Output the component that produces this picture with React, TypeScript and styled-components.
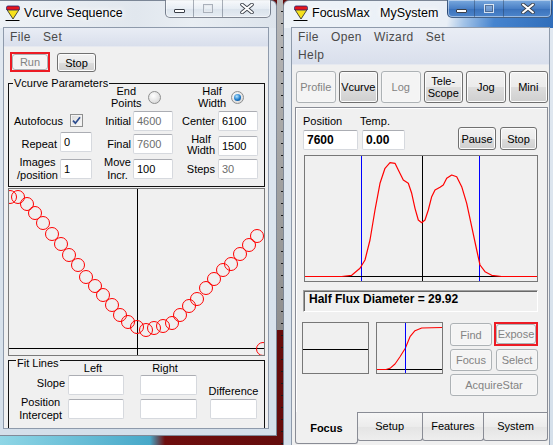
import React from "react"
import styled, { createGlobalStyle } from "styled-components"

const GlobalStyle = createGlobalStyle`
  html, body { margin: 0; padding: 0; }
  body {
    width: 553px;
    height: 445px;
    overflow: hidden;
    font-family: "Liberation Sans", Arial, sans-serif;
    font-size: 11px;
    color: #000;
  }
`

const Desktop = styled.div`
    position: relative;
    width: 553px;
    height: 445px;
    overflow: hidden;
    background:
        repeating-linear-gradient(to bottom, transparent 0 11px, #1a1a1a 11px 12px) 281px 0 / 2px 445px no-repeat,
        linear-gradient(to bottom, #b8b8b8, #8e8e8e) 277px 0 / 6px 330px no-repeat,
        linear-gradient(to right, #8fd6e6 0px, #47a8c9 150px, #6e0e0e 165px, #4f0707 100%);
`

// windows sit on a free desktop canvas
const Frame = styled.div<{ $x: number; $w: number; $h: number; $active?: boolean }>`
    position: absolute;
    left: ${p => p.$x}px;
    top: 0;
    width: ${p => p.$w}px;
    height: ${p => p.$h}px;
    box-sizing: border-box;
    padding: 0 7px 6px;
    display: flex;
    flex-direction: column;
    border: 1px solid rgba(50, 60, 80, 0.55);
    border-radius: 6px 6px 0 0;
    background:
        ${p => p.$active
            ? "linear-gradient(100deg, #eef3f8 0%, #e9eff6 60%, #a4c4e8 66%, #4684cf 77%, #2e6cb9 100%) top / 100% 27px no-repeat"
            : "linear-gradient(90deg, #eef2f6, #e1e7ee 50%, #e9eef3 70%, #dde4ec) top / 100% 27px no-repeat"},
        linear-gradient(#e2e9f1, #d4dfea);
`

const TitleBar = styled.div`
    height: 26px;
    display: flex;
    align-items: flex-start;
    flex-shrink: 0;
`

const IconBox = styled.svg`
    width: 16px;
    height: 16px;
    margin: 4px 0 0 2px;
    flex-shrink: 0;
`

const Title = styled.div`
    margin: 4px 0 0 3px;
    font-size: 12.5px;
    line-height: 16px;
    white-space: pre;
    text-shadow: 0 0 6px #fff, 0 0 10px #fff, 0 0 3px #fff;
`

const CaptionGroup = styled.div<{ $active?: boolean }>`
    display: flex;
    margin: -1px -2px 0 auto;
    height: 18px;
    box-sizing: border-box;
    border: 1px solid rgba(30, 40, 60, 0.55);
    border-top: none;
    border-radius: 0 0 5px 5px;
    overflow: hidden;
    background: ${p => p.$active
        ? "linear-gradient(#7aa9de, #4a80c6 50%, #3a71ba 51%, #4d86cc)"
        : "linear-gradient(rgba(255,255,255,.75), rgba(232,238,245,.7) 50%, rgba(215,224,234,.7) 51%, rgba(230,236,243,.75))"};
    box-shadow: inset 0 0 0 1px rgba(255, 255, 255, 0.45);
`

const CapButton = styled.div<{ $w: number }>`
    width: ${p => p.$w}px;
    display: flex;
    align-items: center;
    justify-content: center;
    & + & { border-left: 1px solid rgba(30, 40, 60, 0.35); }
`

const MinGlyph = styled.div`
    width: 11px;
    height: 4px;
    margin-top: 4px;
    box-sizing: border-box;
    background: #fff;
    border: 1px solid #3a3f48;
    border-radius: 1px;
`

const MaxGlyph = styled.div<{ $active?: boolean }>`
    width: 10px;
    height: 9px;
    box-sizing: border-box;
    border: 1px solid ${p => p.$active ? "rgba(255,255,255,.7)" : "#a9b0ba"};
    box-shadow: inset 0 0 0 1px ${p => p.$active ? "rgba(40,60,90,.5)" : "#e6e9ee"};
    background: ${p => p.$active ? "rgba(255,255,255,.25)" : "transparent"};
`

const Client = styled.div`
    flex: 1;
    display: flex;
    flex-direction: column;
    background: #f0f0f0;
    border: 1px solid #8e9aab;
    overflow: hidden;
`

const MenuBar = styled.div`
    background: linear-gradient(#e9edf5, #d9dfec);
    border-bottom: 1px solid #e6e9f0;
`

const MenuRow = styled.div`
    height: 18px;
    display: flex;
    align-items: center;
`

const MenuItem = styled.span`
    padding: 0 6px;
    font-size: 12px;
    letter-spacing: 0.4px;
    color: #4a4a4a;
`

const Body = styled.div<{ $pad: string }>`
    display: flex;
    flex-direction: column;
    padding: ${p => p.$pad};
`

const ButtonRow = styled.div`
    display: flex;
    align-items: flex-start;
    gap: 7px;
    margin: 5px 0 0 2px;
`

const Highlight = styled.div<{ $w: number; $h: number }>`
    box-sizing: border-box;
    width: ${p => p.$w}px;
    height: ${p => p.$h}px;
    border: 2px solid #ec1b24;
    display: flex;
`

const WinButton = styled.div<{ $w?: number; $h?: number; $disabled?: boolean }>`
    box-sizing: border-box;
    width: ${p => p.$w ? `${p.$w}px` : "100%"};
    height: ${p => p.$h ? `${p.$h}px` : "100%"};
    display: flex;
    align-items: center;
    justify-content: center;
    text-align: center;
    font-size: 11px;
    line-height: 12px;
    border: 1px solid ${p => p.$disabled ? "#adb2b5" : "#707070"};
    border-radius: 3px;
    background: ${p => p.$disabled
        ? "#f4f4f4"
        : "linear-gradient(#f2f2f2 0%, #ebebeb 50%, #dddddd 51%, #cfcfcf 100%)"};
    box-shadow: inset 0 0 0 1px ${p => p.$disabled ? "#f7f7f7" : "#fcfcfc"};
    color: ${p => p.$disabled ? "#838383" : "#000"};
    flex-shrink: 0;
`

const Group = styled.div<{ $h: number; $mt: number }>`
    box-sizing: border-box;
    height: ${p => p.$h}px;
    margin-top: ${p => p.$mt}px;
    border: 1px solid #111;
    display: flex;
    flex-direction: column;
`

const Legend = styled.div<{ $ml: number; $mt: number }>`
    align-self: flex-start;
    margin: ${p => p.$mt}px 0 0 ${p => p.$ml}px;
    padding: 0 1px;
    line-height: 13px;
    background: #f0f0f0;
    font-size: 11px;
`

const ParamGrid = styled.div`
    display: grid;
    grid-template-columns: 51px 32px 41px 40px 45px 40px;
    grid-template-rows: 24px 23px 24px 25px;
    margin-top: -5px;
`

const FitGrid = styled.div`
    display: grid;
    grid-template-columns: 59px 72px 70px 47px;
    grid-template-rows: 13px 23px 21px;
    margin-top: -8px;
`

const FieldLabel = styled.div<{ $at: string; $v?: string; $pr?: number; $justify?: string; $lh?: number; $mt?: number }>`
    grid-area: ${p => p.$at};
    align-self: ${p => p.$v ?? "center"};
    justify-self: ${p => p.$justify ?? "end"};
    padding-right: ${p => p.$pr ?? 2}px;
    margin-top: ${p => p.$mt ?? 0}px;
    text-align: center;
    line-height: ${p => p.$lh ?? 12}px;
    white-space: nowrap;
`

const ColumnHead = styled.div<{ $at: string }>`
    grid-area: ${p => p.$at};
    width: 50px;
    text-align: center;
    line-height: 13px;
`

const TextBox = styled.div<{ $w: number; $at?: string; $v?: string; $bold?: boolean; $disabled?: boolean }>`
    ${p => p.$at ? `grid-area: ${p.$at};` : ""}
    align-self: ${p => p.$v ?? "center"};
    box-sizing: border-box;
    width: ${p => p.$w}px;
    height: 20px;
    padding: 2px 3px;
    background: #fff;
    border: 1px solid #d6d9de;
    border-top-color: #abadb3;
    border-radius: 2px;
    font-size: ${p => p.$bold ? "12px" : "11px"};
    font-weight: ${p => p.$bold ? 700 : 400};
    line-height: 14px;
    color: ${p => p.$disabled ? "#6d6d6d" : "#000"};
`

const OptionHead = styled.div<{ $at: string; $pl: number; $gap: number }>`
    grid-area: ${p => p.$at};
    display: flex;
    align-items: center;
    padding-left: ${p => p.$pl}px;
    gap: ${p => p.$gap}px;
    line-height: 12px;
    text-align: center;
`

const CheckRow = styled.div<{ $at: string }>`
    grid-area: ${p => p.$at};
    display: flex;
    align-items: center;
    gap: 7px;
    padding-left: 5px;
`

const CheckBox = styled.div`
    width: 13px;
    height: 13px;
    box-sizing: border-box;
    border: 1px solid #8e8f8f;
    background: linear-gradient(135deg, #d8d8d8, #fbfbfb);
    box-shadow: inset 0 0 0 1px #f2f2f2;
    display: flex;
    align-items: center;
    justify-content: center;
`

const Radio = styled.div<{ $on?: boolean }>`
    width: 13px;
    height: 13px;
    box-sizing: border-box;
    border-radius: 50%;
    border: 1px solid #8e8f8f;
    background: radial-gradient(circle at 40% 35%, #ffffff, #cfcfcf);
    display: flex;
    align-items: center;
    justify-content: center;
    flex-shrink: 0;
    &::after {
        content: "";
        display: ${p => p.$on ? "block" : "none"};
        width: 7px;
        height: 7px;
        border-radius: 50%;
        background: radial-gradient(circle at 40% 35%, #b6e6ff, #1a78c8 55%, #0b3f7a);
    }
`

const VChart = styled.div`
    margin-top: 1px;
    height: 168px;
    box-sizing: border-box;
    border: 1px solid #7a7a7a;
    background: #f0f0f0;
    overflow: hidden;
    & svg { display: block; }
`

const Toolbar = styled.div`
    display: grid;
    grid-template-columns: repeat(6, 1fr);
    gap: 3px;
    height: 32px;
    padding-left: 1px;
`

const TabPage = styled.div`
    box-sizing: border-box;
    height: 306px;
    margin-top: 4px;
    padding: 7px 10px 0 7px;
    border: 1px solid #898c95;
    box-shadow: inset 1px 1px 0 #fff;
    background: #f0f0f0;
    display: flex;
    flex-direction: column;
`

const ReadoutRow = styled.div`
    display: flex;
    align-items: flex-end;
`

const Readout = styled.div<{ $ml?: number }>`
    display: flex;
    flex-direction: column;
    margin-left: ${p => p.$ml ?? 0}px;
`

const ReadoutLabel = styled.div<{ $ml?: number }>`
    line-height: 13px;
    margin: 0 0 2px ${p => p.$ml ?? 0}px;
`

const ButtonPair = styled.div`
    display: flex;
    gap: 4px;
    margin-left: auto;
`

const Plot = styled.div<{ $w: number; $h: number; $ml?: number; $mt?: number }>`
    width: ${p => p.$w}px;
    height: ${p => p.$h}px;
    margin-left: ${p => p.$ml ?? 0}px;
    margin-top: ${p => p.$mt ?? 0}px;
    box-sizing: border-box;
    border: 1px solid #777;
    background: #f0f0f0;
    flex-shrink: 0;
    & svg { display: block; }
`

const HfdBox = styled.div`
    box-sizing: border-box;
    width: 235px;
    height: 22px;
    margin-top: 8px;
    padding-left: 5px;
    border: 1px solid #a0a0a0;
    border-right-color: #fff;
    border-bottom-color: #fff;
    box-shadow: inset 1px 1px 0 #696969;
    font-size: 12px;
    font-weight: 700;
    line-height: 17px;
`

const BottomRow = styled.div`
    display: flex;
    align-items: flex-start;
    margin-top: 10px;
`

const FocusButtons = styled.div`
    display: grid;
    grid-template-columns: 42px 44px;
    grid-template-rows: 23px 22px 22px;
    column-gap: 2px;
    row-gap: 3px;
    margin: 1px 0 0 7px;
`

const GridButton = styled(WinButton)<{ $at: string; $justify?: string }>`
    grid-area: ${p => p.$at};
    justify-self: ${p => p.$justify ?? "stretch"};
`

const GridHighlight = styled(Highlight)<{ $at: string }>`
    grid-area: ${p => p.$at};
    margin-top: -1px;
`

const TabStrip = styled.div`
    display: flex;
    align-items: flex-start;
`

const Tab = styled.div<{ $w: number; $selected?: boolean }>`
    position: relative;
    z-index: ${p => p.$selected ? 1 : 0};
    box-sizing: border-box;
    width: ${p => p.$w}px;
    height: ${p => p.$selected ? 32 : 28}px;
    margin-top: ${p => p.$selected ? -1 : 0}px;
    & + & { margin-left: -1px; }
    display: flex;
    align-items: center;
    justify-content: center;
    padding-bottom: ${p => p.$selected ? 0 : 2}px;
    border: 1px solid #898c95;
    border-top: none;
    border-radius: 0 0 3px 3px;
    background: ${p => p.$selected ? "#f0f0f0" : "linear-gradient(#f6f6f6, #ececec 50%, #e4e4e4 51%, #eeeeee)"};
    font-size: 11px;
    font-weight: ${p => p.$selected ? 700 : 400};
`

const AppIcon: React.FC = () => (
    <IconBox viewBox="0 0 16 16">
        <polygon points="1.5,4 14.5,4 8,14" fill="#f6e11c" stroke="#222" strokeWidth="0.8" />
        <rect x="1.5" y="1" width="13" height="4" rx="1.5" fill="#e5141b" stroke="#1d2270" strokeWidth="0.8" />
        <rect x="0.5" y="15" width="14" height="1" fill="#000" />
    </IconBox>
)

const CloseGlyph: React.FC = () => (
    <svg width="14" height="11" viewBox="0 0 14 11">
        <path d="M2 1.5 L12 9.5 M12 1.5 L2 9.5" stroke="#3a3f48" strokeWidth="3.6" strokeLinecap="round" />
        <path d="M2 1.5 L12 9.5 M12 1.5 L2 9.5" stroke="#fff" strokeWidth="2" strokeLinecap="round" />
    </svg>
)

const Caption: React.FC<{ active?: boolean; widths: [number, number, number] }> = ({ active, widths }) => (
    <CaptionGroup $active={active}>
        <CapButton $w={widths[0]}><MinGlyph /></CapButton>
        <CapButton $w={widths[1]}><MaxGlyph $active={active} /></CapButton>
        <CapButton $w={widths[2]}><CloseGlyph /></CapButton>
    </CaptionGroup>
)

const vcurvePoints: [number, number][] = [
    [1, 8], [9, 8], [18, 15], [26, 24], [34, 34], [43, 45], [52, 55], [60, 66], [69, 76], [77, 88],
    [86, 97], [94, 106], [103, 116], [111, 126], [119, 133], [128, 138], [137, 141], [145, 139],
    [154, 137], [163, 134], [171, 126], [180, 117], [188, 110], [197, 99], [205, 90], [214, 81],
    [222, 75], [231, 65], [240, 56], [248, 47], [254, 160],
]

const profilePath = "M1 121.5 L37.7 121.5 L47.7 120.3 L56 113.3 L61 105 L66 85 L71 55 L76 28.3 L81 13.3 L86 7.7 L91 8.3 L94.3 15 L99.3 25 L104.3 28.3 L107.7 38.3 L111 53.3 L114.3 65 L117.7 67.7 L121 65 L124.3 55 L127.7 41.7 L131 35 L136 32.3 L139.3 30 L142.7 23.3 L147.7 20 L152.7 21.7 L157.7 31.7 L162.7 48.3 L167.7 71.7 L172.7 95 L176 110 L181 116.7 L187.7 120.3 L197.7 121.5 L234 121.5"

const sigmoidPath = "M0 47.5 L10 47.5 L14 46.3 L19 42 L24 34.7 L29.3 26.3 L34 14.7 L39 8.7 L45.7 6 L67 5.5"

const VcurveWindow: React.FC = () => (
    <Frame $x={-5} $w={282} $h={436}>
        <TitleBar>
            <AppIcon />
            <Title>Vcurve Sequence</Title>
            <Caption widths={[27, 28, 47]} />
        </TitleBar>
        <Client>
            <MenuBar>
                <MenuRow>
                    <MenuItem>File</MenuItem>
                    <MenuItem>Set</MenuItem>
                </MenuRow>
            </MenuBar>
            <Body $pad="0 3px 0 4px">
                <ButtonRow>
                    <Highlight $w={40} $h={20}>
                        <WinButton $disabled>Run</WinButton>
                    </Highlight>
                    <WinButton $w={39} $h={19} style={{ marginTop: 1 }}>Stop</WinButton>
                </ButtonRow>

                <Group $h={104} $mt={11}>
                    <Legend $ml={4} $mt={-7}>Vcurve Parameters</Legend>
                    <ParamGrid>
                        <OptionHead $at="1 / 3 / 2 / 5" $pl={19} $gap={6}>
                            <div>End<br />Points</div>
                            <Radio />
                        </OptionHead>
                        <OptionHead $at="1 / 5 / 2 / 7" $pl={25} $gap={5}>
                            <div>Half<br />Width</div>
                            <Radio $on />
                        </OptionHead>

                        <CheckRow $at="2 / 1 / 3 / 3">
                            <span>Autofocus</span>
                            <CheckBox>
                                <svg width="9" height="9" viewBox="0 0 9 9">
                                    <path d="M1 4.6 L3.4 7.2 L8 1.2" fill="none" stroke="#2c4c8e" strokeWidth="1.7" />
                                </svg>
                            </CheckBox>
                        </CheckRow>
                        <FieldLabel $at="2 / 3">Initial</FieldLabel>
                        <TextBox $at="2 / 4" $w={40} $disabled>4600</TextBox>
                        <FieldLabel $at="2 / 5" $pr={3}>Center</FieldLabel>
                        <TextBox $at="2 / 6" $w={40}>6100</TextBox>

                        <FieldLabel $at="3 / 1" $pr={3}>Repeat</FieldLabel>
                        <TextBox $at="3 / 2" $w={32} $v="start">0</TextBox>
                        <FieldLabel $at="3 / 3">Final</FieldLabel>
                        <TextBox $at="3 / 4" $w={40} $disabled>7600</TextBox>
                        <FieldLabel $at="3 / 5" $pr={3} $v="end" $lh={11}>Half<br />Width</FieldLabel>
                        <TextBox $at="3 / 6" $w={40} $v="end">1500</TextBox>

                        <FieldLabel $at="4 / 1" $lh={13}>Images<br />/position</FieldLabel>
                        <TextBox $at="4 / 2" $w={32}>1</TextBox>
                        <FieldLabel $at="4 / 3" $lh={13}>Move<br />Incr.</FieldLabel>
                        <TextBox $at="4 / 4" $w={40}>100</TextBox>
                        <FieldLabel $at="4 / 5" $pr={3}>Steps</FieldLabel>
                        <TextBox $at="4 / 6" $w={40} $disabled>30</TextBox>
                    </ParamGrid>
                </Group>

                <VChart>
                    <svg width="256" height="166" viewBox="0 0 256 166">
                        <line x1="128.5" y1="0" x2="128.5" y2="166" stroke="#000" strokeWidth="1" />
                        <line x1="0" y1="159.5" x2="256" y2="159.5" stroke="#000" strokeWidth="1" />
                        {vcurvePoints.map(([x, y], i) => (
                            <circle key={i} cx={x} cy={y} r="6.5" fill="none" stroke="#f00" strokeWidth="1" />
                        ))}
                    </svg>
                </VChart>

                <Group $h={69} $mt={4}>
                    <Legend $ml={7} $mt={-4}>Fit Lines</Legend>
                    <FitGrid>
                        <ColumnHead $at="1 / 2">Left</ColumnHead>
                        <ColumnHead $at="1 / 3">Right</ColumnHead>

                        <FieldLabel $at="2 / 1" $pr={3} $v="start" $mt={2} $lh={13}>Slope</FieldLabel>
                        <TextBox $at="2 / 2" $w={56} $v="start" />
                        <TextBox $at="2 / 3" $w={57} $v="start" />
                        <FieldLabel $at="2 / 4" $v="end" $justify="center" $pr={0} $lh={13}>Difference</FieldLabel>

                        <FieldLabel $at="3 / 1" $pr={6} $lh={13}>Position<br />Intercept</FieldLabel>
                        <TextBox $at="3 / 2" $w={56} />
                        <TextBox $at="3 / 3" $w={57} />
                        <TextBox $at="3 / 4" $w={47} />
                    </FitGrid>
                </Group>
            </Body>
        </Client>
    </Frame>
)

const FocusMaxWindow: React.FC = () => (
    <Frame $x={283} $w={275} $h={470} $active>
        <TitleBar>
            <AppIcon />
            <Title>{"FocusMax   MySystem"}</Title>
            <Caption active widths={[26, 28, 47]} />
        </TitleBar>
        <Client>
            <MenuBar>
                <MenuRow>
                    <MenuItem>File</MenuItem>
                    <MenuItem>Open</MenuItem>
                    <MenuItem>Wizard</MenuItem>
                    <MenuItem>Set</MenuItem>
                </MenuRow>
                <MenuRow>
                    <MenuItem>Help</MenuItem>
                </MenuRow>
            </MenuBar>
            <Body $pad="6px 1px 0 3px">
                <Toolbar>
                    <WinButton $disabled>Profile</WinButton>
                    <WinButton>Vcurve</WinButton>
                    <WinButton $disabled>Log</WinButton>
                    <WinButton>Tele-<br />Scope</WinButton>
                    <WinButton>Jog</WinButton>
                    <WinButton>Mini</WinButton>
                </Toolbar>

                <TabPage>
                    <ReadoutRow>
                        <Readout>
                            <ReadoutLabel>Position</ReadoutLabel>
                            <TextBox $w={55} $bold>7600</TextBox>
                        </Readout>
                        <Readout $ml={4}>
                            <ReadoutLabel $ml={-2}>Temp.</ReadoutLabel>
                            <TextBox $w={43} $bold>0.00</TextBox>
                        </Readout>
                        <ButtonPair>
                            <WinButton $w={38} $h={23}>Pause</WinButton>
                            <WinButton $w={37} $h={23}>Stop</WinButton>
                        </ButtonPair>
                    </ReadoutRow>

                    <Plot $w={234} $h={127} $ml={1} $mt={5}>
                        <svg width="232" height="125" viewBox="1 1 232 125">
                            <line x1="57.5" y1="0" x2="57.5" y2="127" stroke="#0000ff" strokeWidth="1" />
                            <line x1="175.5" y1="0" x2="175.5" y2="127" stroke="#0000ff" strokeWidth="1" />
                            <line x1="118.5" y1="0" x2="118.5" y2="127" stroke="#000" strokeWidth="1" />
                            <line x1="38" y1="121.5" x2="198" y2="121.5" stroke="#000" strokeWidth="1" />
                            <path d={profilePath} fill="none" stroke="#f00" strokeWidth="1.2" strokeLinejoin="round" />
                        </svg>
                    </Plot>

                    <HfdBox>Half Flux Diameter = 29.92</HfdBox>

                    <BottomRow>
                        <Plot $w={67} $h={52} $ml={-1}>
                            <svg width="65" height="50" viewBox="1 1 65 50">
                                <line x1="0" y1="27.5" x2="67" y2="27.5" stroke="#000" strokeWidth="1" />
                            </svg>
                        </Plot>
                        <Plot $w={67} $h={52} $ml={7}>
                            <svg width="65" height="50" viewBox="1 1 65 50">
                                <line x1="0" y1="47.5" x2="67" y2="47.5" stroke="#000" strokeWidth="1" />
                                <path d={sigmoidPath} fill="none" stroke="#f00" strokeWidth="1.1" strokeLinejoin="round" />
                                <line x1="29.5" y1="0" x2="29.5" y2="52" stroke="#0000ff" strokeWidth="1" />
                            </svg>
                        </Plot>
                        <FocusButtons>
                            <GridButton $at="1 / 1" $disabled>Find</GridButton>
                            <GridHighlight $at="1 / 2" $w={44} $h={24}>
                                <WinButton $disabled>Expose</WinButton>
                            </GridHighlight>
                            <GridButton $at="2 / 1" $disabled>Focus</GridButton>
                            <GridButton $at="2 / 2" $w={42} $justify="end" $disabled>Select</GridButton>
                            <GridButton $at="3 / 1 / 4 / 3" $disabled>AcquireStar</GridButton>
                        </FocusButtons>
                    </BottomRow>
                </TabPage>

                <TabStrip>
                    <Tab $w={63} $selected>Focus</Tab>
                    <Tab $w={66}>Setup</Tab>
                    <Tab $w={63}>Features</Tab>
                    <Tab $w={65}>System</Tab>
                </TabStrip>
            </Body>
        </Client>
    </Frame>
)

export default function App() {
    return (
        <>
            <GlobalStyle />
            <Desktop>
                <VcurveWindow />
                <FocusMaxWindow />
            </Desktop>
        </>
    )
}
